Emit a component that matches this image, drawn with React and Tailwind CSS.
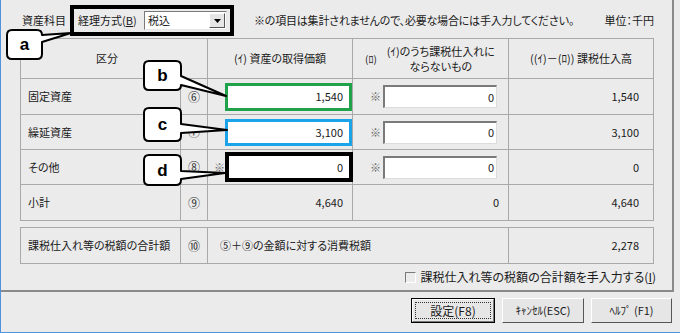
const F = "font-['Noto_Sans_CJK_JP','Noto_Sans',sans-serif] [font-feature-settings:'palt']";
const L = "border-[#a9a9a9]";

function Input3() {
  return (
    <div className="flex items-center pl-[17px]">
      <span className="w-[13px] shrink-0 text-[#666]">※</span>
      <div className="w-[114px] h-[23px] shrink-0 bg-white border-t-2 border-l-2 border-b border-r border-t-[#7a7a7a] border-l-[#7a7a7a] border-b-[#dcdcdc] border-r-[#dcdcdc] flex items-center justify-end pr-[2px]">
        0
      </div>
    </div>
  );
}

function Circ({ children }) {
  return (
    <div className={`w-[27px] border-r ${L} flex items-center justify-center text-[12px] text-[#333]`}>
      {children}
    </div>
  );
}

export default function App() {
  return (
    <div className={`relative w-[680px] h-[333px] overflow-hidden bg-[#ebebeb] border-l border-b border-[#4f93dc] text-[11px] text-[#1a1a1a] leading-none ${F}`}>
      <div className="w-[673px] h-[292px] border-r-2 border-b-2 border-[#8a8a8a] pl-[19px] flex flex-col">
        {/* top row */}
        <div className="w-[634px] h-[38px] pt-[5px] flex items-start shrink-0">
          <div className="w-[50px] h-[31px] pl-[2px] flex items-center shrink-0">資産科目</div>
          <div className="w-[164px] h-[31px] shrink-0 border-4 border-black flex items-center pl-[4px] pr-[3px]">
            <span>
              経理方式(<span className="underline">B</span>)
            </span>
            <div className="ml-auto w-[83px] h-[19px] bg-white border-t border-l border-b border-r border-t-[#7a7a7a] border-l-[#7a7a7a] border-b-[#e6e6e6] border-r-[#e6e6e6] flex items-center">
              <span className="pl-[3px]">税込</span>
              <div className="ml-auto mr-[1px] w-[16px] h-[15px] bg-[#e6e6e6] border-t border-l border-b border-r border-t-white border-l-white border-b-[#555] border-r-[#555] flex items-center justify-center">
                <svg width="7" height="4" viewBox="0 0 7 4">
                  <path d="M0 0H7L3.5 4Z" fill="#000" />
                </svg>
              </div>
            </div>
          </div>
          <div className="h-[31px] ml-[20px] flex items-center tracking-[-0.2px]">
            ※の項目は集計されませんので、必要な場合には手入力してください。
          </div>
          <div className="h-[31px] ml-auto flex items-center">単位：千円</div>
        </div>

        {/* main table */}
        <div className={`w-[634px] border-t border-l ${L} shrink-0`}>
          <div className={`flex h-[40px] border-b ${L}`}>
            <div className={`w-[187px] border-r ${L} flex items-center justify-center pr-[14px]`}>区分</div>
            <div className={`w-[145px] border-r ${L} flex items-center justify-center`}>(ｲ) 資産の取得価額</div>
            <div className={`w-[156px] border-r ${L} flex items-center pl-[12px]`}>
              <span className="text-[10px]">(ﾛ)</span>
              <div className="ml-[10px] flex flex-col items-center gap-[4px]">
                <span>(ｲ)のうち課税仕入れに</span>
                <span>ならないもの</span>
              </div>
            </div>
            <div className={`w-[145px] border-r ${L} flex items-center justify-center`}>((ｲ)－(ﾛ)) 課税仕入高</div>
          </div>

          {/* 固定資産 */}
          <div className={`flex h-[36px] border-b ${L}`}>
            <div className={`w-[160px] border-r ${L} flex items-center pl-[7px]`}>固定資産</div>
            <Circ>⑥</Circ>
            <div className={`w-[145px] border-r ${L} flex items-center pl-[17px]`}>
              <div className="w-[127px] h-[28px] shrink-0 border-[3px] border-[#1fa24a] bg-white flex items-center justify-end pr-[6px]">1,540</div>
            </div>
            <div className={`w-[156px] border-r ${L} flex items-center`}>
              <Input3 />
            </div>
            <div className={`w-[145px] border-r ${L} flex items-center justify-end pr-[14px]`}>1,540</div>
          </div>

          {/* 繰延資産 */}
          <div className={`flex h-[35px] border-b ${L}`}>
            <div className={`w-[160px] border-r ${L} flex items-center pl-[7px]`}>繰延資産</div>
            <Circ>⑦</Circ>
            <div className={`w-[145px] border-r ${L} flex items-center pl-[17px]`}>
              <div className="w-[127px] h-[27px] shrink-0 border-[3px] border-[#1aa3e8] bg-white flex items-center justify-end pr-[6px]">3,100</div>
            </div>
            <div className={`w-[156px] border-r ${L} flex items-center`}>
              <Input3 />
            </div>
            <div className={`w-[145px] border-r ${L} flex items-center justify-end pr-[14px]`}>3,100</div>
          </div>

          {/* その他 */}
          <div className={`flex h-[35px] border-b ${L}`}>
            <div className={`w-[160px] border-r ${L} flex items-center pl-[7px]`}>その他</div>
            <Circ>⑧</Circ>
            <div className={`w-[145px] border-r ${L} flex items-center pl-[6px]`}>
              <span className="w-[11px] shrink-0 text-[#666]">※</span>
              <div className="w-[128px] h-[30px] shrink-0 border-4 border-black bg-white flex items-center justify-end pr-[6px]">0</div>
            </div>
            <div className={`w-[156px] border-r ${L} flex items-center`}>
              <Input3 />
            </div>
            <div className={`w-[145px] border-r ${L} flex items-center justify-end pr-[14px]`}>0</div>
          </div>

          {/* 小計 */}
          <div className={`flex h-[36px] border-b ${L}`}>
            <div className={`w-[160px] border-r ${L} flex items-center pl-[7px]`}>小計</div>
            <Circ>⑨</Circ>
            <div className={`w-[145px] border-r ${L} flex items-center justify-end pr-[9px]`}>4,640</div>
            <div className={`w-[156px] border-r ${L} flex items-center justify-end pr-[9px]`}>0</div>
            <div className={`w-[145px] border-r ${L} flex items-center justify-end pr-[14px]`}>4,640</div>
          </div>
        </div>

        {/* tax total table */}
        <div className={`mt-[6px] w-[634px] h-[37px] shrink-0 border-t border-l border-b ${L} flex`}>
          <div className={`w-[160px] border-r ${L} flex items-center pl-[7px]`}>課税仕入れ等の税額の合計額</div>
          <Circ>⑩</Circ>
          <div className={`w-[301px] border-r ${L} flex items-center pl-[12px]`}>⑤＋⑨の金額に対する消費税額</div>
          <div className={`w-[145px] border-r ${L} flex items-center justify-end pr-[14px]`}>2,278</div>
        </div>

        {/* checkbox row */}
        <div className="w-[636px] flex-1 flex items-center justify-end">
          <div className="w-[11px] h-[11px] border-t border-l border-b border-r border-t-[#7a7a7a] border-l-[#7a7a7a] border-b-white border-r-white" />
          <span className="ml-[5px] text-[12px]">
            課税仕入れ等の税額の合計額を手入力する(<span className="underline">I</span>)
          </span>
        </div>
      </div>

      {/* buttons */}
      <div className="h-[39px] pt-[6px] pr-[8px] flex justify-end items-start gap-[7px]">
        <div className="w-[84px] h-[25px] border border-black bg-[#e6e6e6] flex">
          <div className="flex-1 border-t border-l border-b border-r border-t-white border-l-white border-b-[#7a7a7a] border-r-[#7a7a7a] p-[2px] flex">
            <div className="flex-1 border border-dotted border-[#333] flex items-center justify-center text-[12px]">設定(F8)</div>
          </div>
        </div>
        <div className="w-[82px] h-[25px] border-t border-l border-b border-r border-t-white border-l-white border-b-[#555] border-r-[#555] bg-[#e6e6e6] flex items-center justify-center text-[11px]">
          ｷｬﾝｾﾙ(ESC)
        </div>
        <div className="w-[81px] h-[25px] border-t border-l border-b border-r border-t-white border-l-white border-b-[#555] border-r-[#555] bg-[#e6e6e6] flex items-center justify-center text-[11px]">
          ﾍﾙﾌﾟ (F1)
        </div>
      </div>

      {/* callouts */}
      <svg className="absolute left-0 top-0 pointer-events-none" width="680" height="333" viewBox="0 0 680 333">
        <g fill="#fff" stroke="#000" strokeWidth="2" strokeLinejoin="round">
          <path d="M11 30H36Q41 30 41 35V35L70 33L41 42V54Q41 59 36 59H11Q6 59 6 54V35Q6 30 11 30Z" />
          <path d="M148 61H175Q180 61 180 66V76L225 96L180 85Q180 90 175 90H148Q143 90 143 85V66Q143 61 148 61Z" />
          <path d="M148 108H175Q180 108 180 113V124L226 130L180 133V136Q180 141 175 141H148Q143 141 143 136V113Q143 108 148 108Z" />
          <path d="M148 155H175Q180 155 180 160V171L224 173L180 179V180Q180 185 175 185H148Q143 185 143 180V160Q143 155 148 155Z" />
        </g>
        <g fontFamily="Liberation Sans, Arial, sans-serif" fontWeight="bold" fontSize="17" fill="#000" textAnchor="middle">
          <text x="23.5" y="50">a</text>
          <text x="161.5" y="81">b</text>
          <text x="161.5" y="130">c</text>
          <text x="161.5" y="176">d</text>
        </g>
      </svg>
    </div>
  );
}
